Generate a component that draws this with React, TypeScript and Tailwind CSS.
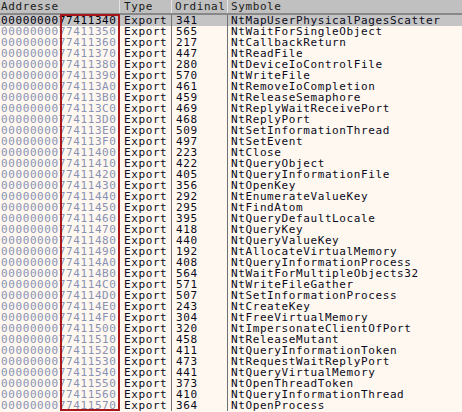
import React from "react";

const rows: [string, string][] = [
  ["341", "NtMapUserPhysicalPagesScatter"],
  ["565", "NtWaitForSingleObject"],
  ["217", "NtCallbackReturn"],
  ["447", "NtReadFile"],
  ["280", "NtDeviceIoControlFile"],
  ["570", "NtWriteFile"],
  ["461", "NtRemoveIoCompletion"],
  ["459", "NtReleaseSemaphore"],
  ["469", "NtReplyWaitReceivePort"],
  ["468", "NtReplyPort"],
  ["509", "NtSetInformationThread"],
  ["497", "NtSetEvent"],
  ["223", "NtClose"],
  ["422", "NtQueryObject"],
  ["405", "NtQueryInformationFile"],
  ["356", "NtOpenKey"],
  ["292", "NtEnumerateValueKey"],
  ["295", "NtFindAtom"],
  ["395", "NtQueryDefaultLocale"],
  ["418", "NtQueryKey"],
  ["440", "NtQueryValueKey"],
  ["192", "NtAllocateVirtualMemory"],
  ["408", "NtQueryInformationProcess"],
  ["564", "NtWaitForMultipleObjects32"],
  ["571", "NtWriteFileGather"],
  ["507", "NtSetInformationProcess"],
  ["243", "NtCreateKey"],
  ["304", "NtFreeVirtualMemory"],
  ["320", "NtImpersonateClientOfPort"],
  ["458", "NtReleaseMutant"],
  ["411", "NtQueryInformationToken"],
  ["473", "NtRequestWaitReplyPort"],
  ["441", "NtQueryVirtualMemory"],
  ["373", "NtOpenThreadToken"],
  ["410", "NtQueryInformationThread"],
  ["364", "NtOpenProcess"],
];

export default function App() {
  return (
    <div
      className="relative w-[462px] h-[412px] overflow-hidden bg-[#fff8f0] text-[11px] leading-[11px] tracking-[0.6px] text-[#0a0a20]"
      style={{ fontFamily: '"DejaVu Sans Mono", "Liberation Mono", monospace' }}
    >
      <div className="flex h-[13px] bg-[#c0c0c0] text-[#1a1a1a] border-b-2 border-[#888888] box-content">
        <div className="w-[120px] pl-[1px] pt-[1px] border-r border-[#e4e4e4]">Addresse</div>
        <div className="w-[52px] pl-[4px] pt-[1px] border-r border-[#e4e4e4]">Type</div>
        <div className="w-[56px] pl-[3px] pt-[1px] border-r border-[#e4e4e4]">Ordinal</div>
        <div className="flex-1 pl-[3px] pt-[1px]">Symbole</div>
      </div>
      <div className="flex flex-col">
        {rows.map(([ord, sym], i) => {
          const addr = (0x77411340 + i * 0x10).toString(16).toUpperCase();
          const sel = i === 0;
          return (
            <div key={i} className={`flex h-[11px] ${sel ? "bg-[#c4c4c4]" : ""}`}>
              <div className={`w-[120px] pl-[1px] whitespace-nowrap ${sel ? "text-[#000010]" : "text-[#8892b4]"}`}>
                {"00000000" + addr}
              </div>
              <div className="w-[52px] pl-[4px] border-r border-[#707070]">Export</div>
              <div className="w-[56px] pl-[4px] border-r border-[#707070]">{ord}</div>
              <div className="flex-1 pl-[3px] whitespace-nowrap">{sym}</div>
            </div>
          );
        })}
      </div>
      <div className="absolute left-[60px] top-[14px] w-[60px] h-[397px] border-2 border-[#a8161c]" />
    </div>
  );
}
